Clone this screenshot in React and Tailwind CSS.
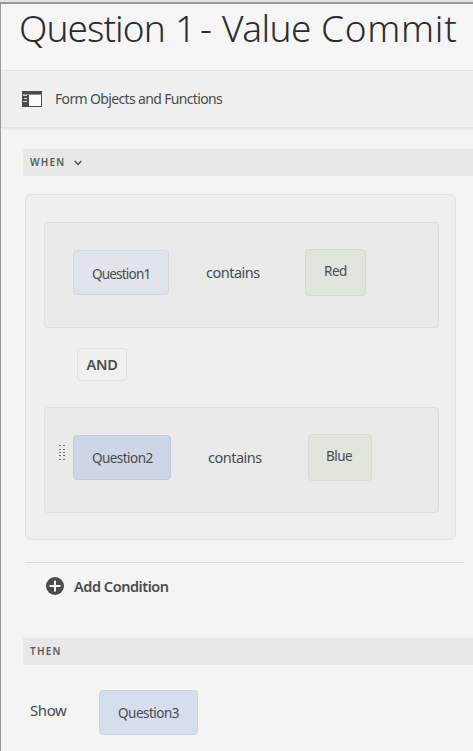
import React from "react";

function Rail() {
  return (
    <svg className="block h-4 w-5 shrink-0" viewBox="0 0 20 16" shapeRendering="crispEdges">
      <path fill="#4b4b4b" d="M0 0H20V16H0Z" />
      <path fill="#8a8a8a" d="M0 3H20V4H0Z" />
      <path fill="#d8d8d8" d="M1 4H5V5H1ZM2 7H5V8H2ZM1 10H5V11H1Z" />
      <path fill="#fafafa" d="M7 4H19V15H7Z" />
    </svg>
  );
}

function Grip() {
  return (
    <svg className="mt-[37px] ml-[14px] block h-4 w-[6px] shrink-0" viewBox="0 0 6 16" shapeRendering="crispEdges">
      {[0, 4, 7, 10, 14].map((y) => (
        <path key={y} fill="#777777" d={`M0 ${y}h2v1h-2zM4 ${y}h2v1h-2z`} />
      ))}
    </svg>
  );
}

function Section({ children }) {
  return (
    <div className="ml-[22px] flex h-[27px] items-center bg-[#e8e8e8] pb-px pl-[7px] text-[10px] leading-4 font-semibold tracking-[1.2px] text-[#5a5a5a]">
      {children}
    </div>
  );
}

function Condition({ grip, name, chip, contains, value, valueBox }) {
  return (
    <div className="flex h-[106px] w-[395px] rounded-[4px] border border-[#dedede] bg-[#eaeaea]">
      <div className="w-7 shrink-0">{grip && <Grip />}</div>
      <div className={`mt-[27px] flex h-[45px] shrink-0 rounded-[4px] border pl-[18px] text-[13.5px] leading-5 ${chip}`}>
        {name}
      </div>
      <div className={`mt-[39px] shrink-0 text-[14.5px] leading-5 tracking-[-0.5px] ${contains}`}>contains</div>
      <div className={`mt-[26px] h-[47px] shrink-0 rounded-[4px] border border-[#d5dbd1] bg-[#e1e6dd] pt-[11px] text-[13.5px] leading-5 tracking-[-0.5px] ${valueBox}`}>
        {value}
      </div>
    </div>
  );
}

export default function App() {
  return (
    <div className="h-[751px] w-[473px] overflow-hidden bg-[#e4e4e4] pt-[2px] font-['Noto_Sans','Open_Sans',sans-serif] whitespace-nowrap text-[#4b4b4b]">
      <div className="h-full border-t-2 border-l border-[#999999] bg-[#f4f4f4]">
        <h1 className="flex h-[67px] border-b border-[#e5e5e5] bg-[#f5f5f5] pl-[18px] text-[37px] leading-[47px] font-light text-[#2c2c2c]">
          <span className="w-[156px] tracking-[-0.95px]">Question </span>
          <span className="w-[25px]">1 </span>
          <span className="w-[22px]">- </span>
          <span className="w-[99px] tracking-[-0.6px]">Value </span>
          <span className="tracking-[0.7px]">Commit</span>
        </h1>
        <div className="flex h-[57px] border-b border-[#e4e4e4] bg-[#efefef] pl-[21px]">
          <div className="pt-5"><Rail /></div>
          <span className="mt-[18px] ml-[13px] text-[14px] leading-5 tracking-[-0.65px]">Form Objects and Functions</span>
        </div>
        <div className="mb-[19px] ml-px h-[2px] bg-[#eaeaea]" />
        <Section>
          WHEN
          <svg className="mt-[2px] ml-[9px] h-[6px] w-2" viewBox="0 0 8 6" fill="none" stroke="#4b4b4b" strokeWidth="1.4">
            <path d="M.7 1 4 4.4 7.3 1" />
          </svg>
        </Section>
        <div className="mt-[18px] ml-6 h-[346px] w-[431px] rounded-[6px] border border-[#e2e2e2] bg-[#efefef] pt-[27px] pl-[18px]">
          <Condition
            name="Question1"
            chip="w-24 pt-[13px] tracking-[-0.8px] border-[#d5d9df] bg-[#e1e5eb]"
            contains="ml-[37px] w-[99px]"
            value="Red"
            valueBox="w-[61px] pl-[18px]"
          />
          <div className="mt-5 mb-[26px] ml-[33px] flex h-[33px] w-[50px] items-center justify-center rounded-[4px] border border-[#e1e1e1] bg-[#f0f0f0] pb-[2px] text-[14.5px] leading-5 font-semibold tracking-[-0.3px]">
            AND
          </div>
          <Condition
            grip
            name="Question2"
            chip="w-[98px] pt-3 tracking-[-0.55px] border-[#bfcbe0] bg-[#ccd6e5]"
            contains="ml-[37px] w-[100px]"
            value="Blue"
            valueBox="w-16 pl-[17px]"
          />
        </div>
        <div className="mt-[22px] ml-6 h-px w-[439px] bg-[#dadada]" />
        <div className="mt-[14px] ml-[45px] flex h-[18px] items-center">
          <svg className="h-[18px] w-[18px]" viewBox="0 0 18 18">
            <circle cx="9" cy="9" r="9" fill="#4b4b4b" />
            <path d="M9 3.5v11M3.5 9h11" stroke="#f4f4f4" strokeWidth="2" />
          </svg>
          <span className="-mt-px ml-[10px] text-[14.5px] leading-5 font-semibold tracking-[-0.45px]">Add Condition</span>
        </div>
        <div className="mt-[43px]"><Section>THEN</Section></div>
        <div className="mt-[25px] ml-[29px] flex">
          <span className="mt-[10px] w-[69px] text-[15px] leading-5 tracking-[-0.4px]">Show</span>
          <div className="h-[45px] w-[99px] rounded-[4px] border border-[#c9d3e1] bg-[#d4deec] pt-3 pl-[18px] text-[13.5px] leading-5 tracking-[-0.5px]">
            Question3
          </div>
        </div>
      </div>
    </div>
  );
}
